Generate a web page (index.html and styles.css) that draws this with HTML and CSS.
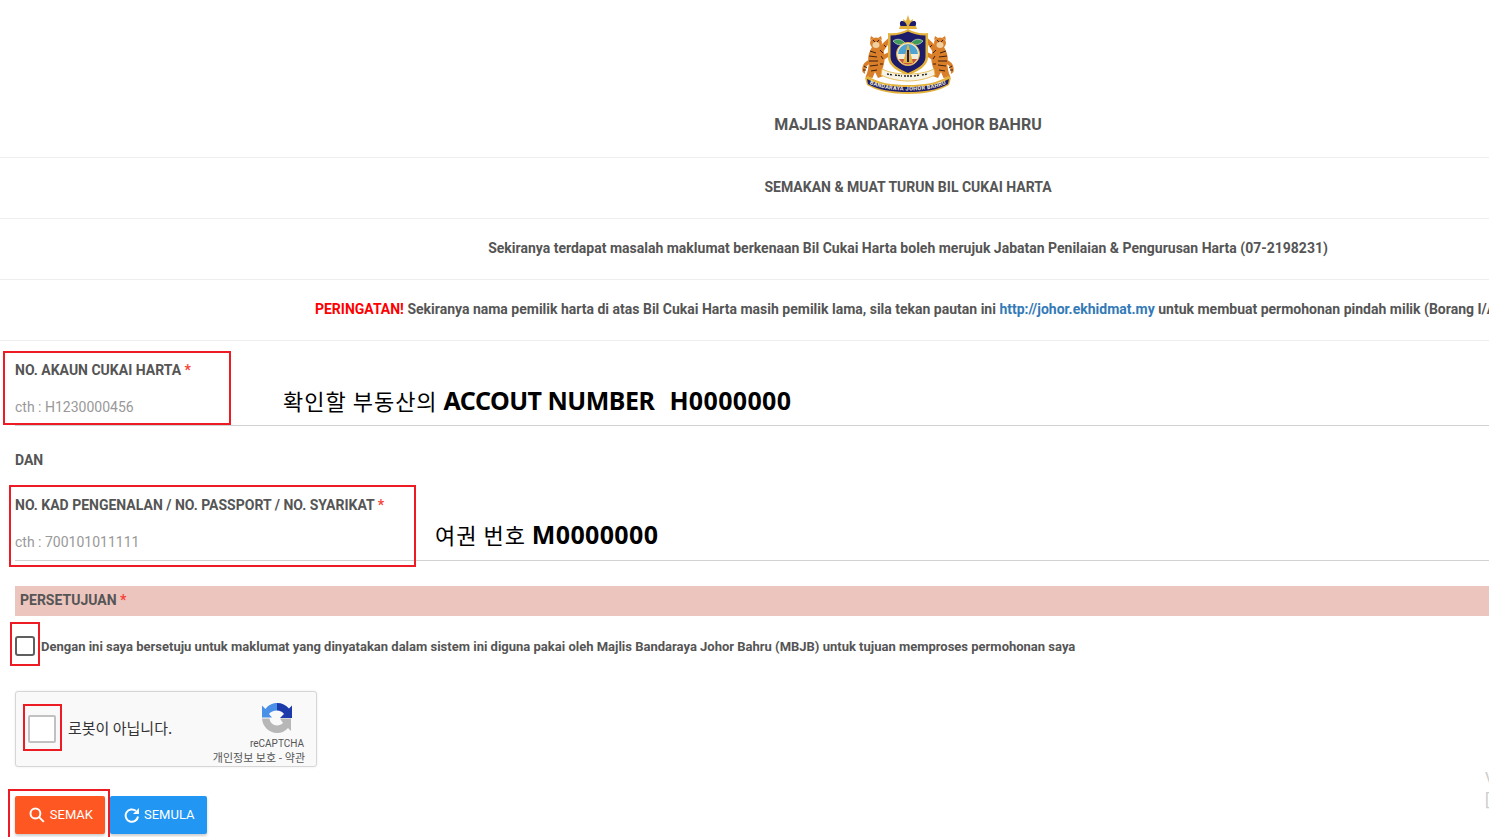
FILE: index.html
```html
<!DOCTYPE html>
<html lang="ms">
<head>
<meta charset="utf-8">
<title>Semakan Bil Cukai Harta</title>
<link rel="stylesheet" href="styles.css">
</head>
<body>
<main class="page">
  <header class="brand">
    <svg class="crest" viewBox="0 0 106 84" width="106" height="84" aria-label="Majlis Bandaraya Johor Bahru">
      <defs>
        <g id="tiger">
          <path class="tiger" d="M14 48C9 50 6.500 54 7.500 60L10 62C10 57 11 53 15 52z"/>
          <path class="tiger" d="M25 34L33 26.500L35.500 29L28 40zM26 44L34 40L34 44.500L27 49z"/>
          <path class="tiger" d="M17 35H27C30.500 42 30.500 50 27 58L30 63.500L23 66L20 60L17.500 66L10.500 65C13 60 13 56 14 52C12 46 14 40 17 35z"/>
          <ellipse class="tiger" cx="21" cy="31" rx="6" ry="5.500"/>
          <path class="tiger" d="M15 28l1-4 3 2zM27 28l-1-4-3 2z"/>
          <ellipse class="face" cx="21" cy="33" rx="3.500" ry="3"/>
          <path class="stripe" d="M15 39l6 2M14 44l8 1M14 49l9 0M15 54l8-1M16 59l6-1M25 38l3 3M26 44l2 3M28 52l-3 0M9 54l3 2M8 58l3 0M29 33l2 2"/>
          <path class="stripe" d="M18 28l2 2M24 28l-2 2"/>
        </g>
      </defs>
      <use href="#tiger"/>
      <use href="#tiger" transform="matrix(-1 0 0 1 106 0)"/>
      <path class="gold" d="M51 9l2-6 2 6 3-2-1 7H49l-1-7z"/>
      <path class="navy" d="M46 9c4 0 5 2 6 5h2c1-3 2-5 6-5 2 2 1 4 0 6H46c-1-2-2-4 0-6z"/>
      <path class="gold" d="M45 14h16l1 3H44z"/>
      <path class="gold" d="M33 21c8 1 15-1 20-4 5 3 12 5 20 4v24c0 10-11 14-20 19-9-5-20-9-20-19z"/>
      <path class="navy" d="M35.500 23.500c7 0 13-2 17.500-4 4.500 2 10.500 4 17.500 4V45c0 8-9 12-17.500 16-8.500-4-17.500-8-17.500-16z"/>
      <path class="leaf" d="M38 29c4-3 9-2 12 2-4 3-9 2-12-2zM68 29c-4-3-9-2-12 2 4 3 9 2 12-2z"/>
      <circle class="ring" cx="53" cy="42" r="11.500"/>
      <path class="sky" d="M43 42a10 10 0 0 1 20 0z"/>
      <path class="rust" d="M44 47a10 10 0 0 0 18 0z"/>
      <path class="gold" d="M53 31l5 20H48z"/>
      <path class="navy" d="M52 38h2v12h-2z"/>
      <path class="ribbon" d="M27 57c8 4 17 5 26 5s18-1 26-5l1 6c-8 4-18 6-27 6s-19-2-27-6z"/>
      <path class="script" d="M32 62l6 1M40 63l7 1M49 64l8 0M59 64l6-1M67 63l6-1"/>
      <path class="gold" d="M10 66c1-1 2-2 3-2 10 7 24 9 40 9s30-2 40-9c1 0 2 1 3 2l-2 7c-10 6-24 9-41 9s-31-3-41-9z"/>
      <path class="navy" d="M12 67c11 6 25 8 41 8s30-2 41-8l-1 5c-10 6-24 8-40 8s-30-2-40-8z"/>
      <path id="crestArc" class="none" d="M13 71c10 5 24 7.500 40 7.500s30-2.500 40-7.500"/>
      <text class="motto"><textPath href="#crestArc" startOffset="50%">BANDARAYA JOHOR BAHRU</textPath></text>
    </svg>
    <h1 class="title">MAJLIS BANDARAYA JOHOR BAHRU</h1>
  </header>

  <div class="notice">SEMAKAN &amp; MUAT TURUN BIL CUKAI HARTA</div>
  <div class="notice">Sekiranya terdapat masalah maklumat berkenaan Bil Cukai Harta boleh merujuk Jabatan Penilaian &amp; Pengurusan Harta (07-2198231)</div>
  <div class="notice"><span><b class="warn">PERINGATAN!</b> Sekiranya nama pemilik harta di atas Bil Cukai Harta masih pemilik lama, sila tekan pautan ini <a class="link" href="#">http://johor.ekhidmat.my</a> untuk membuat permohonan pindah milik (Borang I/A)</span></div>

  <form class="form">
    <div class="field">
      <label class="label">NO. AKAUN CUKAI HARTA <i class="req">*</i></label>
      <input class="input" type="text" placeholder="cth : H1230000456">
    </div>
    <p class="dan">DAN</p>
    <div class="field field-second">
      <label class="label">NO. KAD PENGENALAN / NO. PASSPORT / NO. SYARIKAT <i class="req">*</i></label>
      <input class="input" type="text" placeholder="cth : 700101011111">
    </div>
    <div class="consent-head">PERSETUJUAN <i class="req">*</i></div>
    <div class="consent">
      <span class="check"></span>
      <span>Dengan ini saya bersetuju untuk maklumat yang dinyatakan dalam sistem ini diguna pakai oleh Majlis Bandaraya Johor Bahru (MBJB) untuk tujuan memproses permohonan saya</span>
    </div>
    <div class="captcha">
      <span class="captcha-box"></span>
      <span class="captcha-text">로봇이 아닙니다.</span>
      <div class="captcha-brand">
        <svg class="captcha-logo" viewBox="0 0 30 30" width="30" height="30">
          <path class="rc-blue" d="M15 0C10 0 6 2.500 3.500 6L0 2.500V14.500H10L7 11C8.500 9 11.500 7.500 15 7.500z"/>
          <path class="rc-dark" d="M15 0C20 0 24 2 27 5.500L30 2.500V15H18L22 11C20.500 9 18 7.500 15 7.500z"/>
          <path class="rc-gray" d="M0 15.500H7.500C8 19.500 11 22.500 15 22.500C17.500 22.500 19.500 21.500 21 20L18 15.500H29V28L26 25C23.500 28 19.500 30 15 30C7 30 .5 23.500 0 15.500z"/>
        </svg>
        <span class="captcha-name">reCAPTCHA</span>
        <span class="captcha-links">개인정보 보호 - 약관</span>
      </div>
    </div>
    <div class="actions">
      <button class="btn btn-orange" type="button">
        <svg viewBox="0 0 16 16" width="16" height="16"><circle cx="6.500" cy="6.500" r="5"/><path d="M10.200 10.200L15 15"/></svg><span>SEMAK</span>
      </button>
      <button class="btn btn-blue" type="button">
        <svg viewBox="0 0 16 16" width="16" height="16"><path d="M14 9.500A6.200 6.200 0 1 1 11.800 3.800"/><path class="fill" d="M9 7H15V1z"/></svg><span>SEMULA</span>
      </button>
    </div>
  </form>

  <span class="mark box-a"></span>
  <span class="mark box-b"></span>
  <span class="mark box-c"></span>
  <span class="mark box-d"></span>
  <span class="mark box-e"></span>
  <span class="note note-a">확인할 부동산의 <b class="note-word">ACCOUT NUMBER</b><b class="note-gap">&nbsp;&nbsp;</b><b class="note-code">H0000000</b></span>
  <span class="note note-b">여권 번호 <b class="note-code">M0000000</b></span>
  <span class="edge">V<br>[</span>
</main>
</body>
</html>
```

FILE: styles.css
```css
* { box-sizing: border-box; }
html, body { margin: 0; height: 837px; overflow: hidden; background: #fff; }
body { font-family: Roboto, "Noto Sans CJK KR", sans-serif; color: #555; font-size: 14px; }
.page { position: relative; width: 1816px; height: 837px; overflow: hidden; }

.brand { height: 157px; display: flex; flex-direction: column; align-items: center; padding-top: 12px; }
.crest { display: block; }
.title { margin: 20px 0 0; font-size: 16px; line-height: 18px; font-weight: 700; color: #555; }

.gold { fill: #e3b23c; }
.navy { fill: #1c1c6b; }
.leaf { fill: #3f9a5c; stroke: #f1f1e0; stroke-width: .6; }
.ring { fill: #f2eedd; stroke: #e3b23c; stroke-width: 1; }
.rust { fill: #c9583a; }
.sky { fill: #4fa3d1; }
.tiger { fill: #d97f2a; }
.face { fill: #f0cfa0; }
.stripe { fill: none; stroke: #3d1f10; stroke-width: 1; }
.ribbon { fill: #f6f3e4; stroke: #e3b23c; stroke-width: .8; }
.script { fill: none; stroke: #222; stroke-width: 1.300; stroke-dasharray: 2 1; }
.none { fill: none; }
.motto { fill: #f3efd8; font: 700 5.500px Roboto, sans-serif; text-anchor: middle; letter-spacing: .35px; }

.notice { height: 61px; padding-bottom: 2px; border-top: 1px solid #eee; display: flex; align-items: center; justify-content: center; font-weight: 700; font-size: 14px; color: #555; white-space: nowrap; }
.warn { color: #f00; font-weight: 700; }
.link { color: #337ab7; text-decoration: none; }

.form { border-top: 1px solid #eee; padding: 21px 0 0 15px; }
.field { display: flex; flex-direction: column; width: 1801px; }
.label { font-weight: 700; font-size: 14px; line-height: 16px; color: #555; }
.req { color: #f44336; font-style: normal; }
.input { height: 35px; margin-top: 13px; padding: 0 0 2px; border: 0; border-bottom: 1px solid #d2d2d2; font: 14px Roboto, sans-serif; outline: 0; background: none; }
.input::placeholder { color: #999; opacity: 1; }
.dan { margin: 26px 0 0; font-weight: 700; line-height: 16px; }
.field-second { margin-top: 29px; }

.consent-head { margin-top: 25px; width: 1801px; height: 30px; line-height: 29px; padding-left: 5px; background: #edc5bf; font-weight: 700; color: #555; }
.consent { display: flex; align-items: center; gap: 6px; margin-top: 20px; height: 20px; font-size: 13px; font-weight: 700; white-space: nowrap; }
.check { flex: none; width: 20px; height: 20px; border: 2px solid #5f5f5f; border-radius: 3px; }

.captcha { display: flex; align-items: center; margin-top: 35px; width: 302px; height: 76px; padding-left: 12px; background: #f9f9f9; border: 1px solid #d6d6d6; border-radius: 3px; box-shadow: 0 0 3px rgba(0,0,0,.08); position: relative; }
.captcha-box { width: 28px; height: 28px; background: #fff; border: 2px solid #c1c1c1; border-radius: 2px; }
.captcha-text { margin: 0 0 3px 12px; font-size: 15px; color: #333; font-family: "Noto Sans CJK KR", sans-serif; }
.captcha-brand { position: absolute; right: 12px; top: 11px; display: flex; flex-direction: column; align-items: flex-end; }
.captcha-logo { margin: 0 12px 4px 0; }
.captcha-name { font: 10px/14px Roboto, sans-serif; color: #555; }
.captcha-links { font: 11px/13px "Noto Sans CJK KR", sans-serif; color: #555; white-space: nowrap; margin-right: -1px; }
.rc-blue { fill: #4a90e8; }
.rc-dark { fill: #1c3aa9; }
.rc-gray { fill: #b7b7b7; }

.actions { display: flex; gap: 5px; margin-top: 29px; }
.btn { display: flex; align-items: center; gap: 5px; height: 38px; padding: 0 12px 2px 14px; border: 0; border-radius: 2px; color: #fff; font: 13px Roboto, sans-serif; box-shadow: 0 2px 3px rgba(0,0,0,.2); }
.btn svg { fill: none; stroke: #fff; stroke-width: 2; margin-top: 1px; }
.btn svg .fill { fill: #fff; stroke: none; }
.btn-orange { width: 90px; background: #ff5722; }
.btn-blue { width: 97px; background: #2196f3; gap: 4px; }

.mark { position: absolute; border: 2px solid #ed1c24; }
.box-a { left: 3px; top: 351px; width: 228px; height: 74px; }
.box-b { left: 9px; top: 485px; width: 407px; height: 82px; }
.box-c { left: 10px; top: 622px; width: 30px; height: 44px; }
.box-d { left: 23px; top: 704px; width: 39px; height: 47px; }
.box-e { left: 8px; top: 789px; width: 102px; height: 60px; }

.note { position: absolute; color: #000; font-family: "Noto Sans CJK KR", sans-serif; font-size: 22px; line-height: 30px; white-space: nowrap; letter-spacing: 1px; }
.note b { font-family: "Noto Sans", sans-serif; font-weight: 700; font-size: 25px; letter-spacing: 0; }
.note .note-word { letter-spacing: -.5px; }
.note .note-gap { letter-spacing: 1px; }
.note .note-code { letter-spacing: .35px; }
.note-a { left: 283px; top: 385px; }
.note-b { left: 435px; top: 519px; }
.edge { position: absolute; left: 1485px; top: 768px; color: #ccc; font: 16px/22px Roboto, sans-serif; }
```
